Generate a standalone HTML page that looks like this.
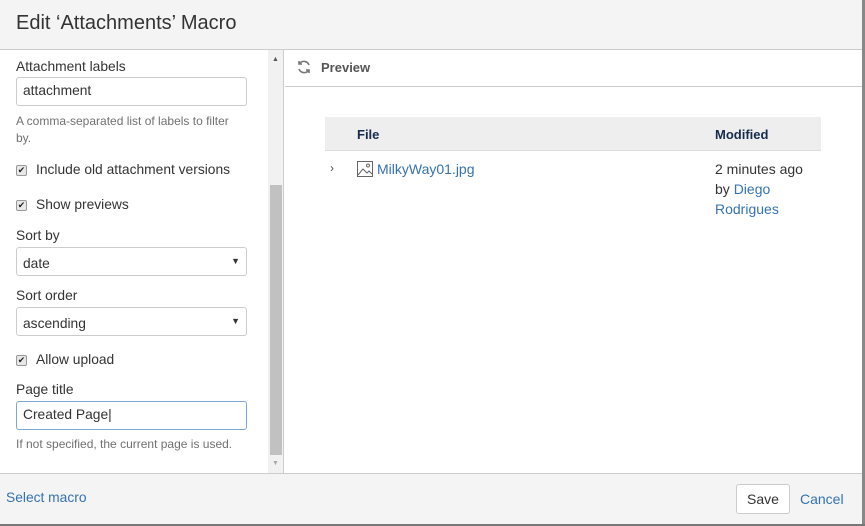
<!DOCTYPE html>
<html><head><style>
*{box-sizing:border-box;margin:0;padding:0}
body{width:865px;height:526px;overflow:hidden;background:#fff;font-family:"Segoe UI","Liberation Sans",sans-serif;color:#333;position:relative}
.hdr{position:absolute;left:0;top:0;width:862px;height:50px;background:#f4f4f4;border-bottom:1px solid #ccc}
.hdr h1{position:absolute;left:16px;top:12px;font-weight:normal;font-size:20px;color:#333}
.edge{position:absolute;left:862px;top:0;width:3px;height:526px;background:#888}
.left{position:absolute;left:0;top:50px;width:284px;height:423px;border-right:1px solid #ccc}
.sb{position:absolute;left:268px;top:50px;width:15px;height:423px;background:#f1f1f1}
.thumb{position:absolute;left:270px;top:185px;width:12px;height:270px;background:#c1c1c1}
.lbl{position:absolute;left:16px;font-size:13.8px;color:#333}
.inp{position:absolute;left:16px;width:231px;height:29px;border:1px solid #ccc;border-radius:3px;font-size:13.8px;padding:5px 6px;background:#fff}
.help{position:absolute;left:16px;font-size:12px;color:#707070;line-height:17px;width:228px}
.cb{position:absolute;left:16px;width:11px;height:11px;border:1px solid #999;background:#e8e8e8;border-radius:2px;font-size:9px;line-height:9px;text-align:center;color:#222}
.arr{position:absolute;right:6px;top:8px;font-size:9px}
.ph{position:absolute;left:285px;top:50px;width:577px;height:37px;border-bottom:1px solid #ccc}
.ph span{position:absolute;left:36px;top:10px;font-size:13px;font-weight:bold;color:#555;font-family:"Liberation Sans",sans-serif}
.tbl{position:absolute;left:325px;top:117px;width:496px;height:34px;background:#eee;border-bottom:1px solid #ddd;font-family:"Liberation Sans",sans-serif;font-weight:bold;font-size:13px;color:#172b4d}
.t{position:absolute;font-family:"Liberation Sans",sans-serif;font-size:14px;line-height:20px}
a,.lnk{color:#3572b0}
.ftr{position:absolute;left:0;top:473px;width:862px;height:51px;background:#f4f4f4;border-top:1px solid #ccc}
.bot{position:absolute;left:0;top:524px;width:865px;height:2px;background:#777}
</style></head><body>
<div class="hdr"><h1>Edit ‘Attachments’ Macro</h1></div>
<div class="edge"></div>
<div class="left"></div>
<div class="sb"></div><div class="thumb"></div>
<div style="position:absolute;left:272px;top:56px;font-size:7px;color:#555">▲</div>
<div style="position:absolute;left:272px;top:460px;font-size:7px;color:#aaa">▼</div>

<div class="lbl" style="top:59px">Attachment labels</div>
<div class="inp" style="top:77px">attachment</div>
<div class="help" style="top:113px">A comma-separated list of labels to filter by.</div>
<div class="cb" style="top:165px">✔</div><div class="lbl" style="left:36px;top:162px">Include old attachment versions</div>
<div class="cb" style="top:200px">✔</div><div class="lbl" style="left:36px;top:197px">Show previews</div>
<div class="lbl" style="top:228px">Sort by</div>
<div class="inp" style="top:247px;padding-top:8px">date<span class="arr">▼</span></div>
<div class="lbl" style="top:288px">Sort order</div>
<div class="inp" style="top:307px;padding-top:8px;height:29px;overflow:hidden">ascending<span class="arr">▼</span></div>
<div class="cb" style="top:355px">✔</div><div class="lbl" style="left:36px;top:352px">Allow upload</div>
<div class="lbl" style="top:382px">Page title</div>
<div class="inp" style="top:401px;border-color:#7fa4d6">Created Page|</div>
<div class="help" style="top:436px">If not specified, the current page is used.</div>

<div class="ph"><svg style="position:absolute;left:11px;top:9px" width="16" height="16" viewBox="0 0 16 16" fill="none" stroke="#777" stroke-width="1.6"><path d="M13 6A5.5 5.5 0 0 0 3.5 4.5M3 2v3h3M3 10a5.5 5.5 0 0 0 9.5 1.5M13 14v-3h-3"/></svg><span>Preview</span></div>
<div class="tbl"><span style="position:absolute;left:32px;top:10px">File</span><span style="position:absolute;left:390px;top:10px">Modified</span></div>
<div class="t" style="left:330px;top:158px;color:#555;font-size:12px">›</div>
<svg style="position:absolute;left:357px;top:161px" width="16" height="16" viewBox="0 0 16 16" fill="none" stroke="#666" stroke-width="1"><rect x="0.5" y="0.5" width="15" height="15"/><path d="M1 14l5-6 4 4 2-2 3 3"/><circle cx="11" cy="4.5" r="1.5"/></svg>
<div class="t lnk" style="left:377px;top:159px">MilkyWay01.jpg</div>
<div class="t" style="left:715px;top:159px;color:#333">2 minutes ago<br>by <span class="lnk">Diego</span><br><span class="lnk">Rodrigues</span></div>

<div class="ftr"></div>
<div class="bot"></div>
<div class="lbl lnk" style="left:6px;top:490px">Select macro</div>
<div style="position:absolute;left:736px;top:484px;width:54px;height:30px;border:1px solid #ccc;border-radius:3px;background:#fff;font-size:14px;text-align:center;line-height:28px;font-family:'Liberation Sans',sans-serif">Save</div>
<div class="t lnk" style="left:800px;top:489px">Cancel</div>
</body></html>
